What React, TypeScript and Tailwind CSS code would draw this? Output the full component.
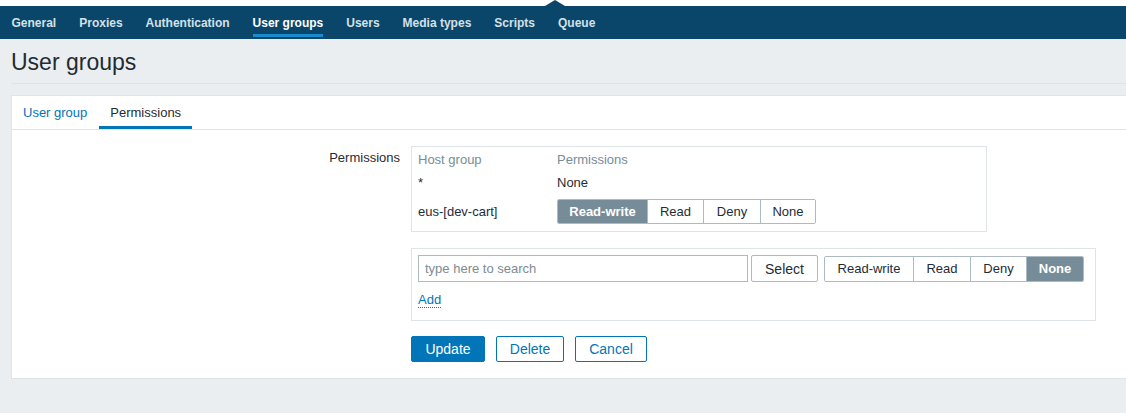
import React from "react";

const navItems = ["General", "Proxies", "Authentication", "User groups", "Users", "Media types", "Scripts", "Queue"];

type SegmentProps = {
  options: { label: string; width: string }[];
  active: string;
  height: string;
};

const Segmented = ({ options, active, height }: SegmentProps) => (
  <div className={`flex ${height} border border-[#acbbc2] rounded-[2px] overflow-hidden`}>
    {options.map((o, i) => {
      const on = o.label === active;
      return (
        <div
          key={o.label}
          className={`${o.width} flex items-center justify-center ${i > 0 ? "border-l border-[#acbbc2]" : ""} ${
            on ? "bg-[#768d99] text-white font-bold" : "bg-white text-[#1f2c33]"
          }`}
        >
          {o.label}
        </div>
      );
    })}
  </div>
);

const App = () => {
  return (
    <div className="min-h-[413px] bg-[#ebeef0] overflow-hidden font-['Liberation_Sans',Arial,sans-serif] text-[13px] leading-[16px] text-[#1f2c33]">
      <div className="h-[6px] bg-white" />
      <nav className="relative h-[33px] bg-[#0a466a] flex">
        <div className="absolute left-[545px] -top-[6px] w-0 h-0 border-l-[10px] border-r-[10px] border-b-[6px] border-l-transparent border-r-transparent border-b-[#0a466a]" />
        {navItems.map((item) => {
          const on = item === "User groups";
          return (
            <div
              key={item}
              className={`relative flex items-center px-[11.5px] first:pl-[11px] text-[12px] font-bold ${on ? "text-white" : "text-[#d5e0e7]"}`}
            >
              {item}
              {on && <span className="absolute left-[11.5px] right-[11.5px] bottom-[2px] h-[3px] bg-[#1a8ad0]" />}
            </div>
          );
        })}
      </nav>

      <div className="ml-[11px] h-[45px] flex items-center pt-[1px] border-b border-[#dde3e7]">
        <h1 className="text-[23px] leading-[28px] text-[#1f2c33]">User groups</h1>
      </div>

      <div className="ml-[11px] -mr-[20px] mt-[11px] bg-white border border-[#dfe4e7] pb-[16px]">
        <div className="flex h-[34px] border-b border-[#dfe4e7]">
          <div className="flex items-center pl-[11px] pr-3 text-[#0275b8]">User group</div>
          <div className="relative flex items-center px-[11px] text-[#1f2c33]">
            Permissions
            <span className="absolute left-0 right-0 bottom-0 h-[3px] bg-[#0275b8]" />
          </div>
        </div>

        <div className="flex pt-[16px]">
          <div className="w-[388px] text-right pt-[4px]">Permissions</div>
          <div className="ml-[11px] flex flex-col">
            <div className="w-[576px] border border-[#dfe4e7] px-[6px] pt-[4px] pb-[5px]">
              <div className="flex items-center h-[18px] text-[#768d99]">
                <div className="w-[139px]">Host group</div>
                <div>Permissions</div>
              </div>
              <div className="flex items-center h-[28px]">
                <div className="w-[139px]">*</div>
                <div>None</div>
              </div>
              <div className="flex items-center h-[29px]">
                <div className="w-[139px]">eus-[dev-cart]</div>
                <Segmented
                  height="h-[25px]"
                  active="Read-write"
                  options={[
                    { label: "Read-write", width: "w-[89px]" },
                    { label: "Read", width: "w-[56px]" },
                    { label: "Deny", width: "w-[57px]" },
                    { label: "None", width: "w-[55px]" },
                  ]}
                />
              </div>
            </div>

            <div className="mt-[16px] w-[685px] border border-[#dfe4e7] px-[6px] pt-[6px] pb-[12px]">
              <div className="flex items-center">
                <input
                  className="w-[330px] h-[27px] border border-[#acbbc2] px-[6px] text-[13px] outline-none placeholder:text-[#7c8b93]"
                  placeholder="type here to search"
                />
                <button className="ml-[3px] w-[67px] h-[27px] border border-[#acbbc2] rounded-[2px] bg-white text-[14px] text-[#1f2c33]">
                  Select
                </button>
                <div className="ml-[6px]">
                  <Segmented
                    height="h-[26px]"
                    active="None"
                    options={[
                      { label: "Read-write", width: "w-[88px]" },
                      { label: "Read", width: "w-[57px]" },
                      { label: "Deny", width: "w-[56px]" },
                      { label: "None", width: "w-[57px]" },
                    ]}
                  />
                </div>
              </div>
              <div className="mt-[10px]">
                <span className="text-[#0275b8] border-b border-dotted border-[#0275b8]">Add</span>
              </div>
            </div>

            <div className="mt-[15px] flex gap-[11px]">
              <button className="w-[74px] h-[26px] rounded-[2px] border border-[#0275b8] bg-[#0275b8] text-white text-[14px]">
                Update
              </button>
              <button className="w-[68px] h-[26px] rounded-[2px] border border-[#0275b8] bg-white text-[#0275b8] text-[14px]">
                Delete
              </button>
              <button className="w-[72px] h-[26px] rounded-[2px] border border-[#0275b8] bg-white text-[#0275b8] text-[14px]">
                Cancel
              </button>
            </div>
          </div>
        </div>
      </div>
    </div>
  );
};

export default App;
